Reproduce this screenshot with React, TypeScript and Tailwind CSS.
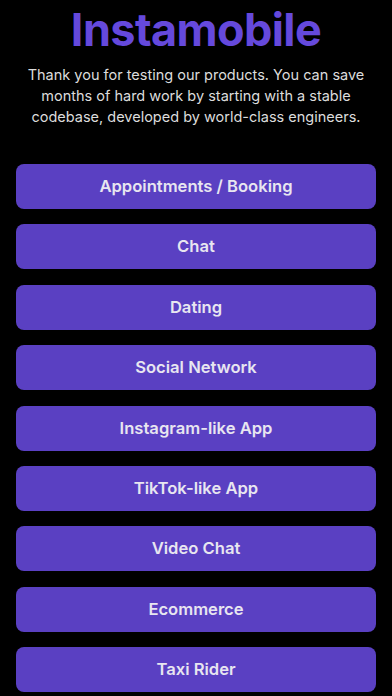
const apps = [
  "Appointments / Booking",
  "Chat",
  "Dating",
  "Social Network",
  "Instagram-like App",
  "TikTok-like App",
  "Video Chat",
  "Ecommerce",
  "Taxi Rider",
];

export default function App() {
  return (
    <div className="h-[696px] w-[392px] overflow-hidden bg-black font-['Inter',sans-serif]">
      <h1 className="pt-[5px] text-center text-[45px] font-bold leading-[50px] tracking-[-0.6px] text-[#6549dc]">
        Instamobile
      </h1>
      <p className="mx-auto mt-[9px] w-[360px] text-center text-[14.5px] leading-[21px] text-[#dcdcdc]">
        Thank you for testing our products. You can save months of hard work by starting with a stable codebase, developed by world-class engineers.
      </p>
      <div className="mt-[37px] flex flex-col gap-[15.4px] px-4">
        {apps.map((name) => (
          <button
            key={name}
            type="button"
            className="flex h-[45px] w-full items-center justify-center rounded-lg bg-[#5a40c2] text-[16.6px] font-semibold text-[#e8e6f0]"
          >
            {name}
          </button>
        ))}
      </div>
    </div>
  );
}
